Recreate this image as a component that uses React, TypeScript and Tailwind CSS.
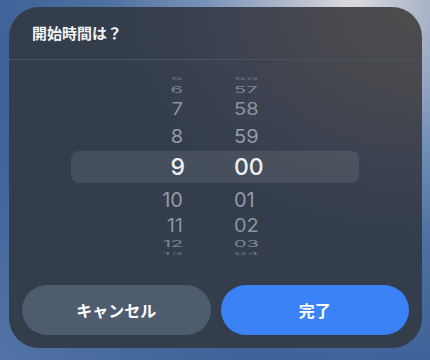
import React from "react";

type Row = { h: string; m: string; height: string; scale: string; color: string; size: string; weight: string };

const rows: Row[] = [
  { h: "5", m: "56", height: "h-[10px]", scale: "scale-y-[0.2]", color: "text-[#6f7784]", size: "text-[20px]", weight: "font-normal" },
  { h: "6", m: "57", height: "h-[12px]", scale: "scale-y-[0.45]", color: "text-[#7e8693]", size: "text-[20px]", weight: "font-normal" },
  { h: "7", m: "58", height: "h-[26px]", scale: "scale-y-[0.84]", color: "text-[#8c94a0]", size: "text-[20px]", weight: "font-normal" },
  { h: "8", m: "59", height: "h-[29px]", scale: "scale-y-[0.92]", color: "text-[#959ca8]", size: "text-[20px]", weight: "font-normal" },
  { h: "9", m: "00", height: "h-[32px]", scale: "scale-y-100", color: "text-[#eef0f3]", size: "text-[23px]", weight: "font-medium" },
  { h: "10", m: "01", height: "h-[33px]", scale: "scale-y-100", color: "text-[#939aa6]", size: "text-[20px]", weight: "font-normal" },
  { h: "11", m: "02", height: "h-[20px]", scale: "scale-y-[0.9]", color: "text-[#8c94a0]", size: "text-[20px]", weight: "font-normal" },
  { h: "12", m: "03", height: "h-[16px]", scale: "scale-y-[0.42]", color: "text-[#7e8693]", size: "text-[20px]", weight: "font-normal" },
  { h: "13", m: "04", height: "h-[4px]", scale: "scale-y-[0.2]", color: "text-[#6f7784]", size: "text-[20px]", weight: "font-normal" },
];

export default function App() {
  return (
    <div className="w-[430px] h-[360px] overflow-hidden bg-[radial-gradient(ellipse_at_82%_0%,#dcdcde_0%,#b3bccb_12%,#7892b8_30%,#4d6fa0_50%,#3f6399_72%,#5273a4_100%)] pt-[7px] pl-[9px]">
      <div
        className="w-[413px] h-[341px] rounded-[30px] flex flex-col overflow-hidden bg-[radial-gradient(ellipse_75%_70%_at_100%_0%,#4c4c4e_0%,#48494d_30%,#3c4250_65%,#333d4c_100%)]"
        style={{ fontFamily: "Inter, 'Noto Sans CJK JP', sans-serif" }}
      >
        <div className="h-[52px] flex items-center pl-[23px]">
          <span className="text-[15px] font-bold text-[#f2f3f5]" style={{ fontFamily: "'Noto Sans CJK JP', sans-serif" }}>
            開始時間は？
          </span>
        </div>
        <div className="h-px bg-[#4a5260]" />
        <div className="relative flex-1">
          <div className="absolute left-[62px] top-[91px] w-[288px] h-[32px] rounded-[8px] bg-[#ffffff17]" />
          <div className="relative pt-[14px] flex flex-col">
            {rows.map((r, i) => (
              <div key={i} className={`${r.height} flex items-center`}>
                <div className={`w-[176px] flex justify-end ${i === 4 ? "pr-0" : "pr-[2px]"}`}>
                  <span className={`${r.size} ${r.weight} ${r.color} ${r.scale} leading-none inline-block`}>{r.h}</span>
                </div>
                <div className="w-[49px]" />
                <div className="flex justify-start">
                  <span className={`${r.size} ${r.weight} ${r.color} ${r.scale} leading-none inline-block`}>{r.m}</span>
                </div>
              </div>
            ))}
          </div>
        </div>
        <div className="flex gap-[10px] px-[13px] pb-[13px]">
          <button
            className="flex-1 h-[50px] rounded-full bg-[#4f5c6e] text-white text-[16px] font-bold flex items-center justify-center"
            style={{ fontFamily: "'Noto Sans CJK JP', sans-serif" }}
          >
            キャンセル
          </button>
          <button
            className="flex-1 h-[50px] rounded-full bg-[#3a82f6] text-white text-[16px] font-bold flex items-center justify-center"
            style={{ fontFamily: "'Noto Sans CJK JP', sans-serif" }}
          >
            完了
          </button>
        </div>
      </div>
    </div>
  );
}
